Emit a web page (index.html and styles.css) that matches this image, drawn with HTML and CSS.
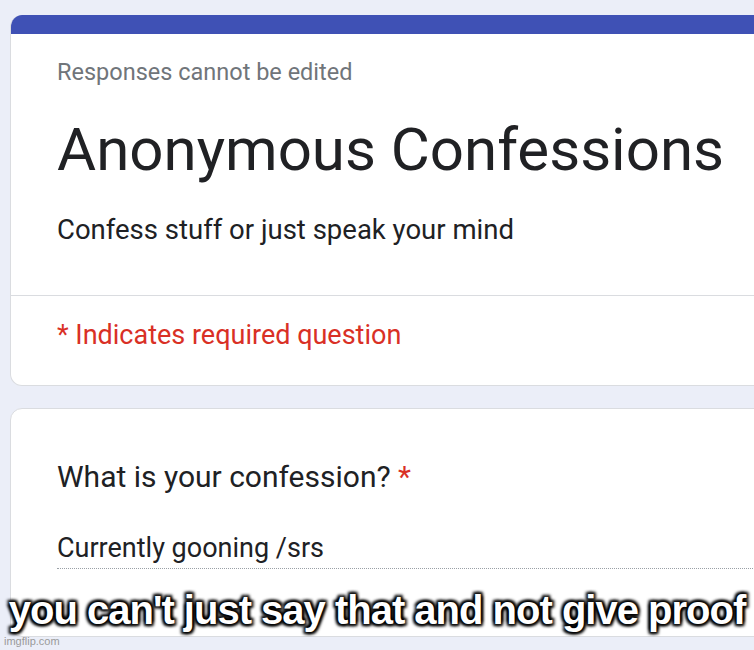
FILE: index.html
```html
<!DOCTYPE html>
<html lang="en">
<head>
  <meta charset="UTF-8">
  <meta name="viewport" content="width=device-width, initial-scale=1.0">
  <title>Anonymous Confessions</title>
  <link rel="stylesheet" href="styles.css">
</head>
<body>
  <div class="page">
    <div class="card header-card">
      <div class="accent"></div>
      <div class="head">
        <div class="note">Responses cannot be edited</div>
        <h1>Anonymous Confessions</h1>
        <div class="desc">Confess stuff or just speak your mind</div>
      </div>
      <div class="required">* Indicates required question</div>
    </div>

    <div class="card question-card">
      <div class="question">What is your confession? <span class="star">*</span></div>
      <div class="answer">Currently gooning /srs</div>
    </div>
  </div>

  <div class="caption">you can't just say that and not give proof</div>
  <div class="watermark">imgflip.com</div>
</body>
</html>
```

FILE: styles.css
```css
body {
  margin: 0;
  height: 650px;
  overflow: hidden;
  background: #ebeef8;
  font-family: Roboto, Arial, sans-serif;
  color: #202124;
}
.page {
  width: 900px;
  padding: 15px 0 0 10px;
  display: flex;
  flex-direction: column;
  gap: 22px;
}
.card {
  background: white;
  border: 1px solid #dadce0;
  border-radius: 12px;
  overflow: hidden;
}
.header-card {
  border-top: none;
}
.accent {
  height: 19px;
  background: #3f51b5;
}
.head {
  padding: 24px 0 49px 46px;
  border-bottom: 1px solid #dadce0;
}
.note {
  font-size: 23.5px;
  line-height: 28px;
  color: #70757a;
}
h1 {
  margin: 28px 0 0;
  font-size: 60px;
  line-height: 72px;
  font-weight: 400;
}
.desc {
  margin-top: 28px;
  font-size: 27.5px;
  line-height: 32px;
}
.required {
  padding: 23px 0 34px 46px;
  font-size: 27px;
  line-height: 32px;
  color: #d93025;
}
.question-card {
  padding: 50px 0 67px 46px;
}
.question {
  font-size: 30px;
  line-height: 36px;
}
.star {
  color: #d93025;
}
.answer {
  margin-top: 37px;
  padding-bottom: 4px;
  font-size: 27px;
  line-height: 32px;
  border-bottom: 1px dotted #9aa0a6;
}
.caption {
  position: absolute;
  left: 0;
  right: 0;
  top: 590px;
  text-align: center;
  white-space: nowrap;
  font-family: "Liberation Sans", Arial, sans-serif;
  font-weight: bold;
  font-size: 40px;
  line-height: 40px;
  letter-spacing: -1px;
  color: white;
  text-shadow: 2px 2px 3px #000, -2px -2px 3px #000, 2px -2px 3px #000, -2px 2px 3px #000, 0 0 4px #000;
}
.watermark {
  position: absolute;
  left: 4px;
  top: 635px;
  font-family: "Liberation Sans", Arial, sans-serif;
  font-size: 11px;
  color: #9a9a9a;
}
```
